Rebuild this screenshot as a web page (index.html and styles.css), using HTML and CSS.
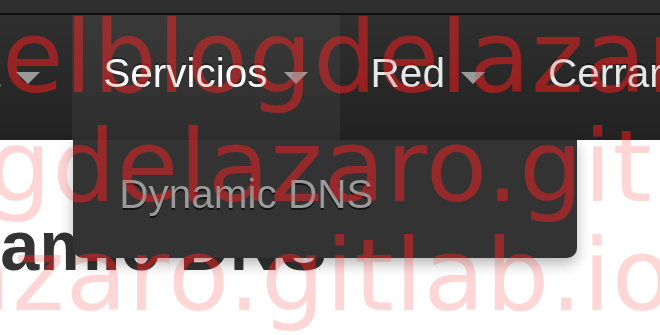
FILE: index.html
```html
<!DOCTYPE html>
<html lang="es">
<head>
<meta charset="utf-8">
<title>Dynamic DNS</title>
<link rel="stylesheet" href="styles.css">
</head>
<body>
<header class="topbar">
  <div class="strip"></div>
  <nav class="navbar">
    <ul class="nav">
      <li class="nav-item"><a class="nav-link">Sistema<b class="caret"></b></a></li>
      <li class="nav-item open"><a class="nav-link">Servicios<b class="caret"></b></a>
        <ul class="dropdown">
          <li><a class="dropdown-link">Dynamic DNS</a></li>
        </ul>
      </li>
      <li class="nav-item"><a class="nav-link">Red<b class="caret"></b></a></li>
      <li class="nav-item"><a class="nav-link">Cerrar sesión</a></li>
    </ul>
  </nav>
</header>
<main class="content">
  <h2 class="page-title">Dynamic DNS</h2>
</main>
<div class="watermark wm-glow" aria-hidden="true">
  <div class="wm-line wm-line-1">elblogdelazaro.gitlab.io</div>
  <div class="wm-line wm-line-2">elblogdelazaro.gitlab.io</div>
  <div class="wm-line wm-line-3">elblogdelazaro.gitlab.io</div>
</div>
<div class="watermark wm-tint">
  <div class="wm-line wm-line-1">elblogdelazaro.gitlab.io</div>
  <div class="wm-line wm-line-2">elblogdelazaro.gitlab.io</div>
  <div class="wm-line wm-line-3">elblogdelazaro.gitlab.io</div>
</div>
</body>
</html>
```

FILE: styles.css
```css
html, body {
  margin: 0;
  padding: 0;
  background: #ffffff;
}

body {
  width: 660px;
  height: 335px;
  overflow: hidden;
  position: relative;
  font-family: "Liberation Sans", Arial, sans-serif;
}

.strip {
  height: 13px;
  background: #2e2e2e;
  border-bottom: 2px solid #0e0e0e;
}

.navbar {
  height: 125px;
  background: linear-gradient(#2f2f2f, #222222);
}

.nav {
  display: flex;
  height: 100%;
  margin: 0 0 0 -177px;
  padding: 0;
  list-style: none;
}

.nav-item {
  position: relative;
}

.nav-link {
  display: block;
  box-sizing: border-box;
  height: 125px;
  padding: 35px 32px 0 31px;
  font-size: 40.5px;
  line-height: 46px;
  color: #e6e6e6;
  text-shadow: 0 -2px 0 rgba(0, 0, 0, 0.35);
  white-space: nowrap;
}

.nav-item.open > .nav-link {
  background: linear-gradient(#393939, #2e2e2e);
  color: #ffffff;
}

.caret {
  display: inline-block;
  width: 0;
  height: 0;
  margin-left: 16px;
  border-top: 12px solid #9a9a9a;
  border-left: 12px solid transparent;
  border-right: 12px solid transparent;
  vertical-align: 3px;
}

.dropdown {
  position: absolute;
  top: 100%;
  left: 1px;
  z-index: 5;
  box-sizing: border-box;
  width: 504px;
  height: 118px;
  margin: 0;
  padding: 31px 0 0;
  list-style: none;
  background: #333333;
  border-radius: 0 0 10px 10px;
  box-shadow: 0 6px 14px rgba(0, 0, 0, 0.28);
}

.dropdown-link {
  display: block;
  padding-left: 46px;
  font-size: 40.5px;
  line-height: 46px;
  color: #9a9a9a;
  text-shadow: 0 2px 0 rgba(0, 0, 0, 0.6);
  white-space: nowrap;
}

.content {
  margin-left: -132px;
  padding-top: 66px;
}

.page-title {
  margin: 0;
  font-size: 70px;
  line-height: 80px;
  font-weight: bold;
  color: #333333;
  white-space: nowrap;
}

.watermark {
  position: absolute;
  top: 3px;
  left: 0;
  z-index: 10;
  font-family: "DejaVu Sans", sans-serif;
  font-size: 100px;
  font-weight: 400;
  line-height: 109px;
  letter-spacing: 1px;
  white-space: nowrap;
  pointer-events: none;
}

.wm-glow {
  color: rgb(130, 0, 0);
  mix-blend-mode: lighten;
}

.wm-tint {
  color: rgba(255, 0, 0, 0.16);
}

.wm-line-1 { margin-left: 2px; }
.wm-line-2 { margin-left: -259px; }
.wm-line-3 { margin-left: -517px; }
```
